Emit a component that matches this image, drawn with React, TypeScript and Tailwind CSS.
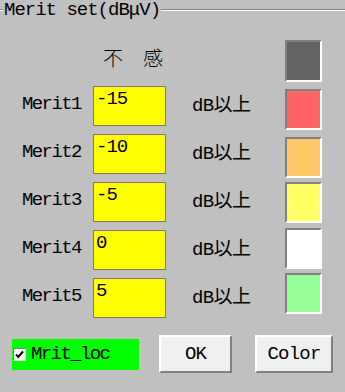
import React from 'react';

const MONO = 'font-["Liberation_Mono","Noto_Sans_CJK_JP",monospace]';

const ROWS = [
  { name: 'Merit1', value: '-15' },
  { name: 'Merit2', value: '-10' },
  { name: 'Merit3', value: '-5' },
  { name: 'Merit4', value: '0' },
  { name: 'Merit5', value: '5' },
];

const Swatch: React.FC<{ color: string; className?: string }> = ({ color, className }) => (
  <div
    className={`w-[37px] h-[41px] border-2 border-t-[#808080] border-l-[#808080] border-b-white border-r-white ${className ?? ''}`}
    style={{ backgroundColor: color }}
  />
);

const Button: React.FC<{ label: string; className?: string }> = ({ label, className }) => (
  <div
    className={`h-[38px] flex items-center justify-center bg-[#f0f0f0] border-2 border-t-white border-l-white border-b-[#808080] border-r-[#808080] text-[19px] tracking-[-0.8px] text-black ${className ?? ''}`}
  >
    {label}
  </div>
);

export default function App() {
  return (
    <div className={`w-[345px] h-[392px] bg-[#c0c0c0] text-black overflow-hidden ${MONO}`}>
      {/* group box title */}
      <div className="flex items-center h-[20px]">
        <div className="w-[3px] h-[2px] border-t border-t-[#808080] border-b border-b-white" />
        <span className="text-[19px] leading-[20px] tracking-[-1px] px-[1px]">Merit set(dBμV)</span>
        <div className="flex-1 h-[2px] border-t border-t-[#808080] border-b border-b-white" />
      </div>

      <div className="flex mt-[20px]">
        {/* left part: header + rows */}
        <div className="flex flex-col pl-[22px] w-[285px]">
          <div className="h-[46px] pl-[81px] pt-[9px] text-[20px] leading-[24px] font-light">不　感</div>
          {ROWS.map((r) => (
            <div key={r.name} className="flex items-start h-[48px]">
              <div className="w-[71px] h-[40px] flex items-center text-[19px] tracking-[-1.6px] pb-[3px]">{r.name}</div>
              <div className="w-[73px] h-[40px] bg-[#ffff00] border border-[#7a7a7a] pl-[2px] pt-[1px] text-[19px] leading-[22px] tracking-[-1px]">
                {r.value}
              </div>
              <div className="h-[40px] flex items-center pl-[26px] text-[19px] tracking-[-0.6px] pt-[1px]">dB以上</div>
            </div>
          ))}
        </div>

        {/* color swatches */}
        <div className="flex flex-col">
          <Swatch color="#646464" className="h-[42px]" />
          <Swatch color="#ff6464" className="mt-[7px]" />
          <Swatch color="#ffc864" className="mt-[7px]" />
          <Swatch color="#ffff64" className="mt-[4px]" />
          <Swatch color="#ffffff" className="mt-[5px]" />
          <Swatch color="#96ff96" className="mt-[4px]" />
        </div>
      </div>

      {/* bottom controls */}
      <div className="flex items-center pl-[12px] mt-[9px]">
        <div className="w-[127px] h-[31px] bg-[#00ff00] flex items-center pl-[1px]">
          <div className="w-[13px] h-[13px] bg-white border border-t-[#808080] border-l-[#808080] border-b-[#e0e0e0] border-r-[#e0e0e0] flex items-center justify-center">
            <svg width="9" height="9" viewBox="0 0 9 9">
              <path d="M1 4.5 L3.3 7 L8 1.5" stroke="black" strokeWidth="2" fill="none" />
            </svg>
          </div>
          <span className="ml-[5px] text-[19px] tracking-[-1.6px]">Mrit_loc</span>
        </div>
        <Button label="OK" className="ml-[20px] w-[73px]" />
        <Button label="Color" className="ml-[23px] w-[78px]" />
      </div>
    </div>
  );
}
